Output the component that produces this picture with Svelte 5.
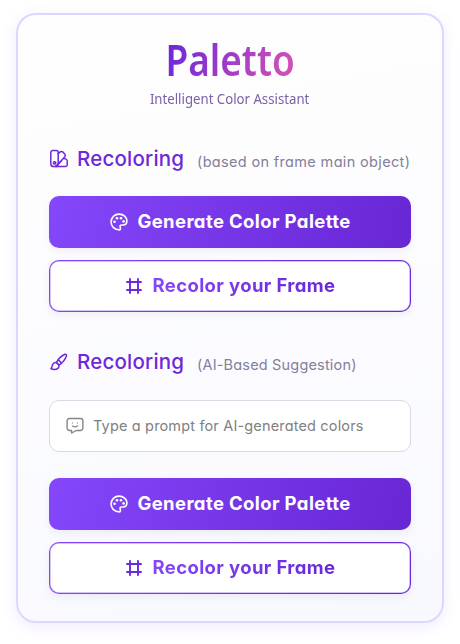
<script>
  const sections = [
    { icon: 'swatch', note: '(based on frame main object)', noteClass: 'frame', prompt: false },
    { icon: 'brush', note: '(AI-Based Suggestion)', noteClass: 'ai', prompt: true }
  ];
</script>

<main>
  <div class="card">
    <header>
      <h1>Paletto</h1>
      <p>Intelligent Color Assistant</p>
    </header>

    {#each sections as section}
      <section class:with-prompt={section.prompt}>
        <div class="heading">
          <svg class="head-icon" viewBox="0 0 20 20" fill="none" stroke="#6d28d9" stroke-width="1.5" stroke-linecap="round" stroke-linejoin="round">
            {#if section.icon === 'swatch'}
              <path d="M3.8 1.5h3.4a2 2 0 0 1 2 2v11.2a2.9 2.9 0 0 1-2.9 2.9H4.7a2.9 2.9 0 0 1-2.9-2.9V3.5a2 2 0 0 1 2-2Z" />
              <path d="M9.2 4.6 11.2 2.9a1.9 1.9 0 0 1 2.7.2l1.9 2.2a1.9 1.9 0 0 1-.2 2.7L9.2 15.3" />
              <path d="m14.6 9.3 2.4.8a1.8 1.8 0 0 1 1.2 1.7v4a1.8 1.8 0 0 1-1.8 1.8H6.3l5.9-5.3" />
              <circle cx="5.6" cy="13.9" r="1.2" />
            {:else}
              <path d="M7.4 10.5c1.6-3.2 4.8-6.5 8.6-8.2.8-.35 1.8.5 1.5 1.4-1.2 3.6-4.3 7.3-7.6 9.4Z" />
              <path d="m9.5 8.1 2.8 2.7M7.4 10.5c-1.6-.3-3.2.5-3.7 2-.4 1.2-.5 2.8-1.8 4 2.4 1.5 6 1.3 7.4-.4.7-.9.9-2 .6-3Z" />
            {/if}
          </svg>
          <h2>Recoloring</h2>
          <span class="note {section.noteClass}">{section.note}</span>
        </div>

        {#if section.prompt}
          <label class="prompt">
            <svg viewBox="0 0 18 18" fill="none" stroke="#858585" stroke-width="1.4" stroke-linecap="round" stroke-linejoin="round">
              <path d="M3.5 1.5h11a2.4 2.4 0 0 1 2.4 2.4v7.2a2.4 2.4 0 0 1-2.4 2.4h-4.2L5.6 16v-2.5H3.5a2.4 2.4 0 0 1-2.4-2.4V3.9A2.4 2.4 0 0 1 3.5 1.5Z" />
              <path stroke-width="1.15" d="M6.4 5.9v.2M11.6 5.9v.2M6.4 8.9c1.2 1.35 4 1.35 5.2 0" />
            </svg>
            <span>Type a prompt for AI-generated colors</span>
          </label>
        {/if}

        <div class="actions">
          <button class="primary">
            <svg viewBox="0 0 18 18" fill="none" stroke="#fff" stroke-width="1.6" stroke-linecap="round" stroke-linejoin="round">
              <path d="M9.3 16.9C4.6 16.9 1.1 13.5 1.1 9S4.6 1.1 9 1.1s7.9 3 7.9 6.6c0 2.9-1.7 4.3-3.9 4.3h-1.3c-1.6 0-2 1.1-1.5 2.1.5 1.2.2 2.8-.9 2.8Z" />
              <g fill="#fff" stroke="none">
                <circle cx="4.5" cy="8.7" r="1.3" />
                <circle cx="7" cy="5.2" r="1.3" />
                <circle cx="11" cy="5.2" r="1.3" />
                <circle cx="13.6" cy="8.4" r="1.3" />
              </g>
            </svg>
            <span>Generate Color Palette</span>
          </button>
          <button class="secondary">
            <svg viewBox="0 0 18 18" fill="none" stroke="#6d28d9" stroke-width="1.9" stroke-linecap="round">
              <path d="M5 2v14M13 2v14M2 5h14M2 13h14" />
            </svg>
            <span>Recolor your Frame</span>
          </button>
        </div>
      </section>
    {/each}
  </div>
</main>

<style>
  :global(body) {
    background: #fff;
  }
  main {
    box-sizing: border-box;
    width: 460px;
    height: 644px;
    padding: 13px 16px 0;
    overflow: hidden;
    font-family: Inter, sans-serif;
    font-feature-settings: 'cv11' 1;
  }
  .card {
    box-sizing: border-box;
    height: 610px;
    padding: 0 31px;
    border: 2px solid #ddd6fe;
    border-radius: 20px;
    background: linear-gradient(170deg, #fefefe 0%, #fdfdff 35%, #f8f9ff 100%);
    box-shadow: 0 4px 16px rgba(124, 58, 237, 0.1);
  }
  header {
    display: flex;
    flex-direction: column;
    align-items: center;
    height: 121px;
    padding-top: 19px;
    box-sizing: border-box;
    font-family: 'Noto Sans', sans-serif;
  }
  h1 {
    margin: 0;
    font-size: 43.5px;
    line-height: 50px;
    font-weight: 600;
    transform: scaleX(0.85);
    background: linear-gradient(115deg, #6d28d9 5%, #d853b3);
    -webkit-background-clip: text;
    background-clip: text;
    color: transparent;
  }
  header p {
    margin: 4px 0 0;
    font-size: 14.5px;
    line-height: 20px;
    white-space: nowrap;
    color: #7b61a8;
    transform: scaleX(0.91);
  }
  .heading {
    display: flex;
    align-items: center;
    height: 46px;
  }
  .head-icon {
    width: 20px;
    height: 20px;
    flex: none;
    margin-right: 8px;
  }
  h2 {
    width: 106px;
    margin: 0;
    font-size: 20.5px;
    line-height: 30px;
    font-weight: 500;
    letter-spacing: 0.2px;
    color: #6d28d9;
    white-space: nowrap;
  }
  .note {
    margin-left: 14px;
    font-size: 14.5px;
    line-height: 20px;
    color: #82809a;
    white-space: nowrap;
  }
  .note.frame {
    margin-top: 5px;
    letter-spacing: 0.34px;
  }
  .note.ai {
    margin-top: 6px;
    letter-spacing: 0.18px;
  }
  .actions {
    display: flex;
    flex-direction: column;
    gap: 12px;
    margin-top: 14px;
  }
  section + section {
    margin-top: 27px;
  }
  .with-prompt .actions {
    margin-top: 26px;
  }
  .prompt {
    box-sizing: border-box;
    display: flex;
    align-items: center;
    height: 52px;
    margin-top: 15px;
    padding-left: 16px;
    border: 1px solid #d9d9e3;
    border-radius: 10px;
    background: #fff;
    color: #808080;
    font-size: 14.5px;
    letter-spacing: 0.16px;
    white-space: nowrap;
  }
  .prompt svg {
    width: 18px;
    height: 18px;
    margin-right: 9px;
  }
  .prompt span {
    margin-bottom: 2px;
  }
  button {
    box-sizing: border-box;
    display: flex;
    align-items: center;
    justify-content: center;
    gap: 9px;
    width: 362px;
    height: 52px;
    padding: 0 0 0 1px;
    border: 0;
    border-radius: 10px;
    font: inherit;
    font-feature-settings: inherit;
    font-size: 18.5px;
    font-weight: 700;
    letter-spacing: 0.38px;
    white-space: nowrap;
    box-shadow: 0 3px 8px rgba(50, 30, 80, 0.07);
  }
  button svg {
    width: 18px;
    height: 18px;
    flex: none;
  }
  button span {
    margin-bottom: 2px;
  }
  .primary {
    color: #fff;
    background: linear-gradient(105deg, #8547fb, #6826d4);
  }
  .secondary {
    border: 1px solid transparent;
    background:
      linear-gradient(#fff, #fff) padding-box,
      linear-gradient(105deg, #8547fb, #6826d4) border-box;
    box-shadow:
      inset 0 0 0 0.5px rgba(118, 55, 231, 0.6),
      0 3px 8px rgba(50, 30, 80, 0.07);
  }
  .secondary span {
    background: linear-gradient(105deg, #8547fb, #6826d4);
    -webkit-background-clip: text;
    background-clip: text;
    color: transparent;
  }
</style>
